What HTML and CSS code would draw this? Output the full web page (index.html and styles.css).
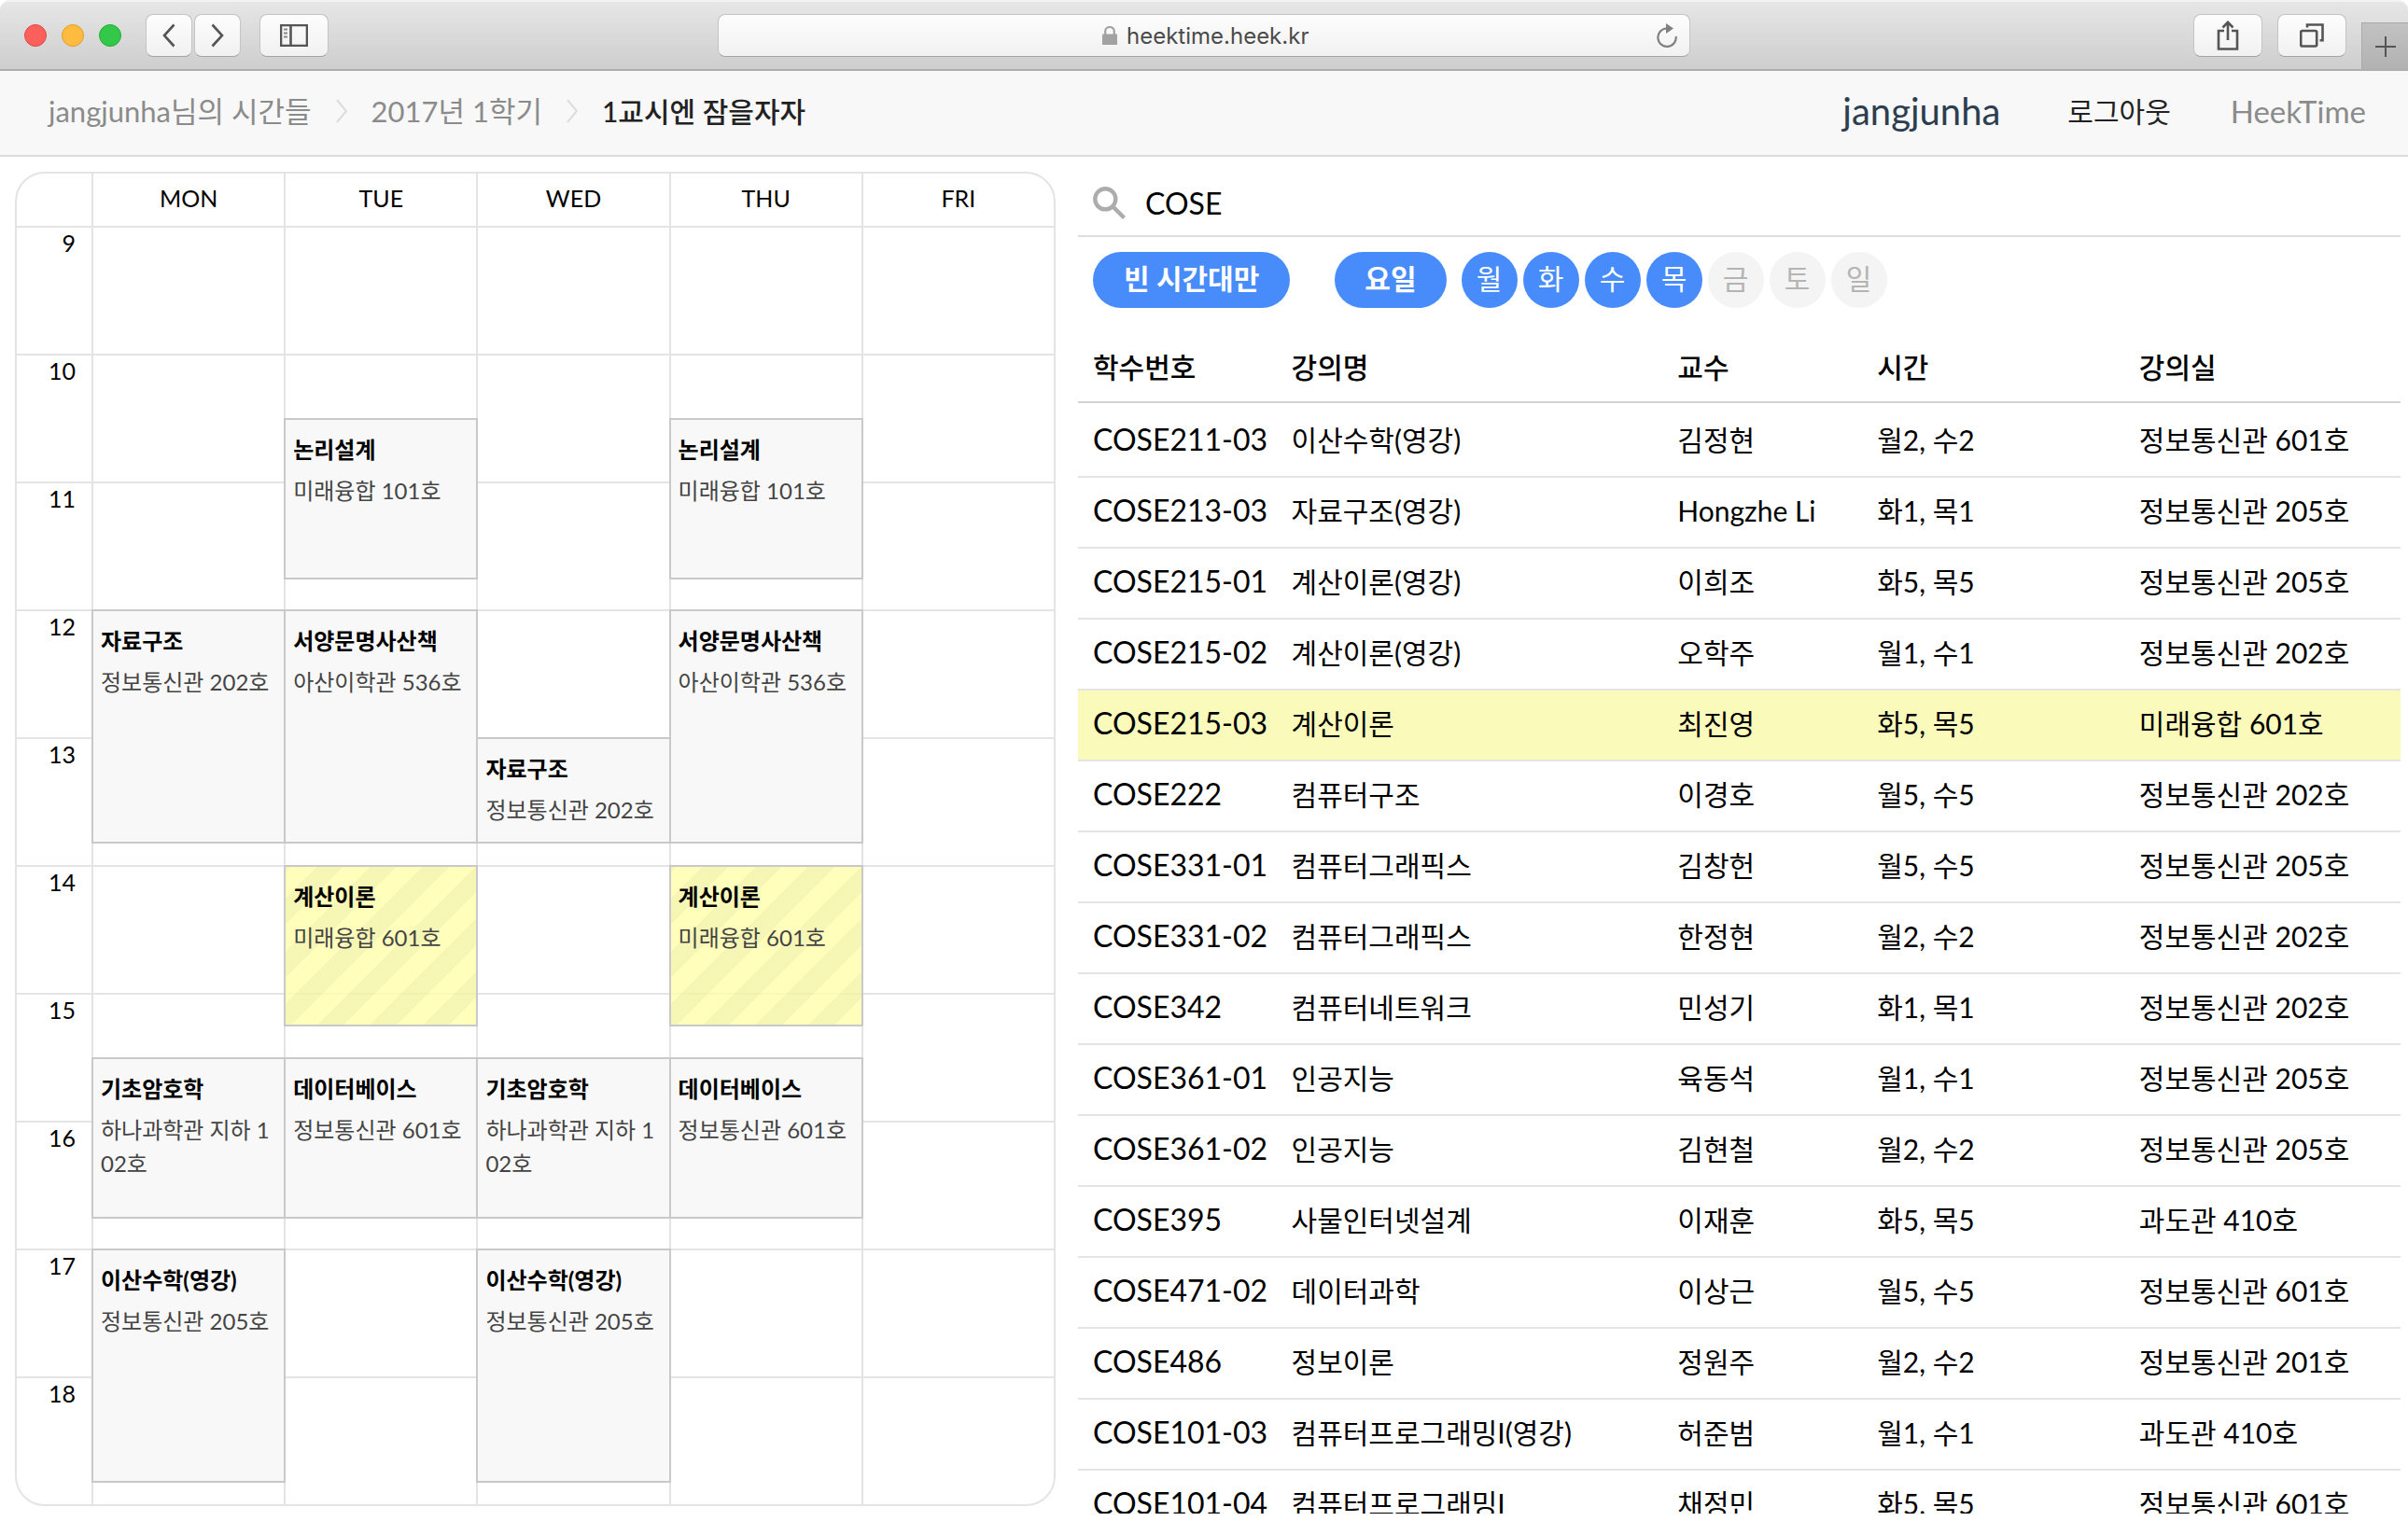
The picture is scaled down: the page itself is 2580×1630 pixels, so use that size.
FILE: index.html
```html
<!DOCTYPE html>
<html lang="ko">
<head>
<meta charset="utf-8">
<title>1교시엔 잠을자자 - HeekTime</title>
<link rel="stylesheet" href="styles.css">
</head>
<body>
<header class="browser">
  <div class="controls">
    <div class="lights"><span class="light red"></span><span class="light amber"></span><span class="light green"></span></div>
    <div class="history">
      <button class="tool tool-nav" aria-label="Back"><svg width="14" height="26" viewBox="0 0 14 26"><path d="M12.500 1.500L2 13l10.500 11.500"/></svg></button>
      <button class="tool tool-nav" aria-label="Forward"><svg width="14" height="26" viewBox="0 0 14 26"><path d="M1.500 1.500L12 13 1.500 24.500"/></svg></button>
    </div>
    <button class="tool tool-wide" aria-label="Sidebar"><svg width="30" height="24" viewBox="0 0 30 24"><path d="M1 1h28v22H1zM11.500 1v22"/><path class="thin" d="M4 5.500h4M4 9.500h4M4 13.500h4"/></svg></button>
  </div>
  <div class="address">
    <svg class="lock" width="16" height="20" viewBox="0 0 16 20"><path class="lock-body" d="M0 8.500h16V20H0z"/><path class="lock-bow" d="M3.200 9V5.500a4.800 4.500 0 0 1 9.600 0V9"/></svg>
    <input class="address-input" aria-label="Address" value="heektime.heek.kr">
    <button class="reload" aria-label="Reload"><svg width="24" height="26" viewBox="0 0 24 26"><path d="M11.500 5.500A9.700 9.700 0 1 0 21.700 14"/><path class="solid" d="M11 0l8 5.400-8 5.600z"/></svg></button>
  </div>
  <div class="actions">
    <button class="tool tool-wide" aria-label="Share"><svg width="24" height="32" viewBox="0 0 24 32"><path d="M8 11H2v19.500h20V11h-6M12 21V2M6.500 7.500L12 1.800l5.500 5.700"/></svg></button>
    <button class="tool tool-wide" aria-label="Tabs"><svg width="26" height="26" viewBox="0 0 26 26"><rect x="1.200" y="8" width="17" height="16.500" rx="1.500"/><path d="M8 4.500V1.500h16.500v16.700h-3"/></svg></button>
    <button class="new-tab" aria-label="New tab"><svg width="24" height="24" viewBox="0 0 24 24"><path d="M12 1v22M1 12h22"/></svg></button>
  </div>
</header>

<nav class="navbar">
  <ol class="crumbs">
    <li><a href="#">jangjunha님의 시간들</a></li>
    <li><svg class="sep" width="12" height="26" viewBox="0 0 12 26"><path d="M1 1l10 12L1 25"/></svg><a href="#">2017년 1학기</a></li>
    <li><svg class="sep" width="12" height="26" viewBox="0 0 12 26"><path d="M1 1l10 12L1 25"/></svg><a class="current" href="#">1교시엔 잠을자자</a></li>
  </ol>
  <div class="account">
    <a class="user" href="#">jangjunha</a>
    <a class="logout" href="#">로그아웃</a>
    <a class="brand" href="#">HeekTime</a>
  </div>
</nav>

<main class="main">
  <section class="timetable">
    <div class="hours">
      <div class="head"></div>
      <div class="slot">9</div><div class="slot">10</div><div class="slot">11</div><div class="slot">12</div><div class="slot">13</div><div class="slot">14</div><div class="slot">15</div><div class="slot">16</div><div class="slot">17</div><div class="slot">18</div>
    </div>
    <div class="day">
      <div class="head">MON</div>
      <div class="slots">
        <div class="slot"></div><div class="slot"></div><div class="slot"></div><div class="slot"></div><div class="slot"></div><div class="slot"></div><div class="slot"></div><div class="slot"></div><div class="slot"></div><div class="slot"></div>
        <article class="event" style="--start:180;--length:109"><h3>자료구조</h3><p>정보통신관 202호</p></article>
        <article class="event" style="--start:390;--length:75"><h3>기초암호학</h3><p>하나과학관 지하 102호</p></article>
        <article class="event" style="--start:480;--length:109"><h3>이산수학(영강)</h3><p>정보통신관 205호</p></article>
      </div>
    </div>
    <div class="day">
      <div class="head">TUE</div>
      <div class="slots">
        <div class="slot"></div><div class="slot"></div><div class="slot"></div><div class="slot"></div><div class="slot"></div><div class="slot"></div><div class="slot"></div><div class="slot"></div><div class="slot"></div><div class="slot"></div>
        <article class="event" style="--start:90;--length:75"><h3>논리설계</h3><p>미래융합 101호</p></article>
        <article class="event" style="--start:180;--length:109"><h3>서양문명사산책</h3><p>아산이학관 536호</p></article>
        <article class="event preview" style="--start:300;--length:75"><h3>계산이론</h3><p>미래융합 601호</p></article>
        <article class="event" style="--start:390;--length:75"><h3>데이터베이스</h3><p>정보통신관 601호</p></article>
      </div>
    </div>
    <div class="day">
      <div class="head">WED</div>
      <div class="slots">
        <div class="slot"></div><div class="slot"></div><div class="slot"></div><div class="slot"></div><div class="slot"></div><div class="slot"></div><div class="slot"></div><div class="slot"></div><div class="slot"></div><div class="slot"></div>
        <article class="event" style="--start:240;--length:49"><h3>자료구조</h3><p>정보통신관 202호</p></article>
        <article class="event" style="--start:390;--length:75"><h3>기초암호학</h3><p>하나과학관 지하 102호</p></article>
        <article class="event" style="--start:480;--length:109"><h3>이산수학(영강)</h3><p>정보통신관 205호</p></article>
      </div>
    </div>
    <div class="day">
      <div class="head">THU</div>
      <div class="slots">
        <div class="slot"></div><div class="slot"></div><div class="slot"></div><div class="slot"></div><div class="slot"></div><div class="slot"></div><div class="slot"></div><div class="slot"></div><div class="slot"></div><div class="slot"></div>
        <article class="event" style="--start:90;--length:75"><h3>논리설계</h3><p>미래융합 101호</p></article>
        <article class="event" style="--start:180;--length:109"><h3>서양문명사산책</h3><p>아산이학관 536호</p></article>
        <article class="event preview" style="--start:300;--length:75"><h3>계산이론</h3><p>미래융합 601호</p></article>
        <article class="event" style="--start:390;--length:75"><h3>데이터베이스</h3><p>정보통신관 601호</p></article>
      </div>
    </div>
    <div class="day">
      <div class="head">FRI</div>
      <div class="slots">
        <div class="slot"></div><div class="slot"></div><div class="slot"></div><div class="slot"></div><div class="slot"></div><div class="slot"></div><div class="slot"></div><div class="slot"></div><div class="slot"></div><div class="slot"></div>
      </div>
    </div>
  </section>

  <section class="lectures">
    <div class="search">
      <label for="query" aria-label="검색"><svg width="36" height="36" viewBox="0 0 36 36"><circle cx="13.300" cy="13.300" r="11"/><path d="M21.500 21.500l12 12"/></svg></label>
      <input id="query" type="text" value="COSE">
    </div>
    <div class="filters">
      <button class="pill">빈 시간대만</button>
      <div class="days">
        <button class="pill pill-days">요일</button>
        <button class="dot on">월</button><button class="dot on">화</button><button class="dot on">수</button><button class="dot on">목</button><button class="dot">금</button><button class="dot">토</button><button class="dot">일</button>
      </div>
    </div>
    <table class="results">
      <colgroup><col class="c-code"><col class="c-name"><col class="c-prof"><col class="c-time"><col></colgroup>
      <thead><tr><th>학수번호</th><th>강의명</th><th>교수</th><th>시간</th><th>강의실</th></tr></thead>
      <tbody>
        <tr><td>COSE211-03</td><td>이산수학(영강)</td><td>김정현</td><td>월2, 수2</td><td>정보통신관 601호</td></tr>
        <tr><td>COSE213-03</td><td>자료구조(영강)</td><td>Hongzhe Li</td><td>화1, 목1</td><td>정보통신관 205호</td></tr>
        <tr><td>COSE215-01</td><td>계산이론(영강)</td><td>이희조</td><td>화5, 목5</td><td>정보통신관 205호</td></tr>
        <tr><td>COSE215-02</td><td>계산이론(영강)</td><td>오학주</td><td>월1, 수1</td><td>정보통신관 202호</td></tr>
        <tr class="selected"><td>COSE215-03</td><td>계산이론</td><td>최진영</td><td>화5, 목5</td><td>미래융합 601호</td></tr>
        <tr><td>COSE222</td><td>컴퓨터구조</td><td>이경호</td><td>월5, 수5</td><td>정보통신관 202호</td></tr>
        <tr><td>COSE331-01</td><td>컴퓨터그래픽스</td><td>김창헌</td><td>월5, 수5</td><td>정보통신관 205호</td></tr>
        <tr><td>COSE331-02</td><td>컴퓨터그래픽스</td><td>한정현</td><td>월2, 수2</td><td>정보통신관 202호</td></tr>
        <tr><td>COSE342</td><td>컴퓨터네트워크</td><td>민성기</td><td>화1, 목1</td><td>정보통신관 202호</td></tr>
        <tr><td>COSE361-01</td><td>인공지능</td><td>육동석</td><td>월1, 수1</td><td>정보통신관 205호</td></tr>
        <tr><td>COSE361-02</td><td>인공지능</td><td>김현철</td><td>월2, 수2</td><td>정보통신관 205호</td></tr>
        <tr><td>COSE395</td><td>사물인터넷설계</td><td>이재훈</td><td>화5, 목5</td><td>과도관 410호</td></tr>
        <tr><td>COSE471-02</td><td>데이터과학</td><td>이상근</td><td>월5, 수5</td><td>정보통신관 601호</td></tr>
        <tr><td>COSE486</td><td>정보이론</td><td>정원주</td><td>월2, 수2</td><td>정보통신관 201호</td></tr>
        <tr><td>COSE101-03</td><td>컴퓨터프로그래밍I(영강)</td><td>허준범</td><td>월1, 수1</td><td>과도관 410호</td></tr>
        <tr><td>COSE101-04</td><td>컴퓨터프로그래밍I</td><td>채정민</td><td>화5, 목5</td><td>정보통신관 601호</td></tr>
      </tbody>
    </table>
  </section>
</main>
</body>
</html>
```
FILE: styles.css
```css
* { box-sizing: border-box; }
body {
  margin: 0;
  height: 100vh;
  display: flex;
  flex-direction: column;
  overflow: hidden;
  background: #fff;
  color: #000;
  font-family: Lato, "Noto Sans CJK KR", sans-serif;
  font-size: 30px;
  line-height: 44px;
}
button, input { font: inherit; color: inherit; border: 0; padding: 0; margin: 0; background: none; }
a { color: inherit; text-decoration: none; }
svg { display: block; fill: none; stroke: #555; stroke-width: 2.6; }

/* Browser toolbar */
.browser {
  flex: none;
  display: flex;
  align-items: center;
  height: 76px;
  border-top: 2px solid #f2f2f2;
  border-bottom: 2px solid #aeaeae;
  border-radius: 10px 10px 0 0;
  background: linear-gradient(#e6e6e6, #cecece);
}
.controls { flex: 1; display: flex; align-items: center; }
.lights { display: flex; gap: 16px; margin: 0 26px; }
.light { width: 24px; height: 24px; border-radius: 50%; border: 1px solid; }
.red { background: #fc605c; border-color: #e04844; }
.amber { background: #fdbc40; border-color: #dfa023; }
.green { background: #34c84a; border-color: #24ab34; }
.history { display: flex; gap: 2px; margin-right: 20px; }
.tool {
  display: flex;
  align-items: center;
  justify-content: center;
  height: 46px;
  border: 1px solid #c4c4c4;
  border-bottom-color: #a4a4a4;
  border-radius: 8px;
  background: linear-gradient(#fdfdfd, #f1f1f1);
}
.tool-nav { width: 50px; }
.tool-wide { width: 74px; }
.thin { stroke-width: 2; stroke: #888; }
.address {
  flex: 0 1 1042px;
  display: flex;
  align-items: center;
  height: 46px;
  padding-left: 44px;
  border: 1px solid #c4c4c4;
  border-bottom-color: #a4a4a4;
  border-radius: 8px;
  background: linear-gradient(#fdfdfd, #f1f1f1);
}
.lock { margin-left: auto; }
.lock-body { fill: #a2a2a2; stroke: none; }
.lock-bow { stroke: #a2a2a2; stroke-width: 2.2; }
.address-input {
  width: 200px;
  margin: 0 auto 0 10px;
  padding-top: 2px;
  font-family: Inter, sans-serif;
  font-size: 24px;
  line-height: 30px;
  color: #4a4a4a;
}
.reload { margin-right: 12px; }
.reload svg { stroke: #808080; stroke-width: 2.2; }
.reload .solid { fill: #808080; stroke: none; }
.actions { flex: 1; display: flex; align-items: center; align-self: stretch; justify-content: flex-end; gap: 16px; }
.new-tab {
  display: flex;
  align-items: center;
  justify-content: center;
  align-self: flex-end;
  width: 50px;
  height: 50px;
  border-top: 1px solid #a9a9a9;
  border-left: 1px solid #a9a9a9;
  background: linear-gradient(#c2c2c2, #b2b2b2);
}
.new-tab svg { stroke-width: 2; }

/* Site navigation */
.navbar {
  flex: none;
  display: flex;
  justify-content: space-between;
  align-items: center;
  height: 92px;
  padding: 0 45px 4px 52px;
  border-bottom: 2px solid #dcdcdc;
  background: #f8f8f8;
}
.crumbs { display: flex; margin: 0; padding: 0; list-style: none; font-size: 31px; color: #8b8b8b; }
.crumbs li { display: flex; align-items: center; }
.sep { margin: 0 26px; stroke: #dcdcdc; stroke-width: 2; }
.current { color: #222; font-size: 30px; font-weight: 500; }
.account { display: flex; align-items: center; color: #222; }
.user { font-size: 40px; color: #2c3e50; margin-right: 72px; }
.logout { margin-right: 64px; }
.brand { font-size: 33px; color: #8b8b8b; }

/* Two panes */
.main {
  flex: 1;
  min-height: 0;
  display: grid;
  grid-template-columns: 1115fr 1417fr;
  grid-template-rows: minmax(0, 1fr);
  column-gap: 24px;
  padding: 16px 8px 8px 16px;
}

/* Weekly timetable */
.timetable {
  align-self: start;
  display: grid;
  grid-template-columns: 80px repeat(5, minmax(0, 1fr));
  border: 2px solid #e4e4e4;
  border-radius: 32px;
  overflow: hidden;
  font-size: 25px;
}
.head { height: 56px; line-height: 52px; text-align: center; }
.slot { height: 137px; border-top: 2px solid #e4e4e4; }
.hours .slot { padding-right: 17px; line-height: 32px; text-align: right; }
.day { border-left: 2px solid #e4e4e4; }
.slots { position: relative; }
.event {
  position: absolute;
  left: -2px;
  right: -2px;
  top: calc(var(--start) * 137px / 60);
  height: calc(var(--length) * 137px / 60 + 2px);
  padding: 14px 8px;
  border: 2px solid #c9c9c9;
  background: #f8f8f8;
  font-size: 24px;
  line-height: 36px;
  word-break: break-all;
}
.preview {
  background: repeating-linear-gradient(-45deg, rgba(255, 255, 170, .8) 0 20px, rgba(243, 243, 162, .8) 20px 40px);
}
.event h3 { margin: 0 0 8px; font-size: 24px; font-weight: 700; }
.event p { margin: 0; color: #444; }

/* Lecture search */
.lectures { overflow: hidden; }
.search {
  display: flex;
  align-items: center;
  gap: 20px;
  height: 70px;
  padding: 0 16px;
  border-bottom: 2px solid #dedede;
}
.search svg { stroke: #acacac; stroke-width: 4.4; }
.search input { flex: 1; min-width: 0; font-size: 32px; outline: 0; }
.filters { display: flex; gap: 48px; padding: 16px 16px 0; }
.days { display: flex; gap: 6px; }
.pill {
  height: 60px;
  padding: 0 33px 4px;
  border-radius: 30px;
  background: #488cfc;
  color: #fff;
  font-weight: 700;
}
.pill-days { padding: 0 32px 4px; margin-right: 10px; }
.dot { width: 60px; height: 60px; padding-bottom: 4px; border-radius: 50%; background: #f4f4f4; color: #b4b4b4; }
.dot.on { background: #488cfc; color: #fff; }

.results { width: 100%; margin-top: 24px; border-collapse: separate; border-spacing: 0; table-layout: fixed; }
.c-code { width: 15%; }
.c-name { width: 29.2%; }
.c-prof { width: 15.1%; }
.c-time { width: 19.8%; }
.results th, .results td { padding: 0 0 0 16px; text-align: left; white-space: nowrap; }
.results th { height: 78px; padding-top: 2px; font-weight: 500; border-bottom: 2px solid #d2d2d2; }
.results td { height: 76px; padding-bottom: 4px; border-bottom: 2px solid #e4e4e4; }
.results tbody tr:first-child td { height: 80px; padding-top: 4px; }
.results td:first-child { font-size: 32px; }
.selected td { background: #fafaba; }
```
